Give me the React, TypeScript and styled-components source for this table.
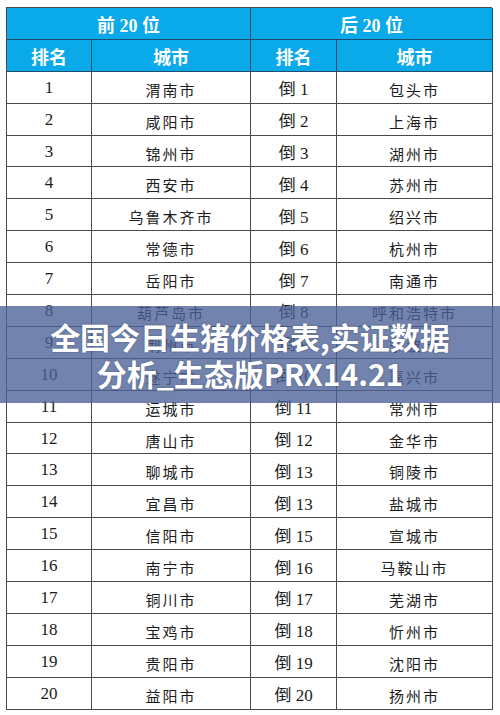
import React from 'react';
import styled, { createGlobalStyle } from 'styled-components';

const GlobalStyle = createGlobalStyle`
  html, body {
    margin: 0;
    padding: 0;
    background: #ffffff;
  }
`;

const Page = styled.div`
  position: relative;
  width: 500px;
  height: 715px;
  overflow: hidden;
  background: #fdfdfd;
  padding: 7px 8px 0 6px;
  box-sizing: border-box;
`;

const Grid = styled.div`
  display: grid;
  grid-template-columns: 85px 159px 86px 156px;
  grid-auto-rows: 31.9px;
  border-top: 1px solid #4a4a4a;
  border-left: 1px solid #4a4a4a;
  font-family: 'Liberation Serif', 'Noto Sans CJK SC', serif;
`;

const Cell = styled.div<{ $head?: boolean; $span?: number; $city?: boolean }>`
  grid-column: span ${(p) => p.$span ?? 1};
  display: flex;
  align-items: center;
  justify-content: center;
  box-sizing: border-box;
  border-right: 1px solid ${(p) => (p.$head ? '#1f4d70' : '#4a4a4a')};
  border-bottom: 1px solid ${(p) => (p.$head ? '#1f4d70' : '#4a4a4a')};
  background: ${(p) => (p.$head ? '#0aa9ea' : '#ffffff')};
  color: ${(p) => (p.$head ? '#ffffff' : '#1c1c1c')};
  font-size: ${(p) => (p.$head ? '18px' : p.$city ? '15px' : '17px')};
  font-weight: ${(p) => (p.$head ? 700 : 400)};
  letter-spacing: ${(p) => (p.$city ? '2px' : '0')};
  padding-top: ${(p) => (p.$city ? '4px' : '1px')};
`;

const Banner = styled.div`
  position: absolute;
  left: 0;
  right: 0;
  top: 306px;
  height: 97px;
  background: rgba(74, 96, 150, 0.78);
  display: flex;
  flex-direction: column;
  align-items: center;
  justify-content: center;
`;

const BannerLine = styled.div`
  font-family: 'Noto Sans CJK SC', 'Noto Sans', sans-serif;
  font-weight: 700;
  font-size: 30px;
  line-height: 37px;
  color: #ffffff;
  text-shadow: 0 0 2px rgba(40, 50, 80, 0.5);
`;

const top = ['渭南市', '咸阳市', '锦州市', '西安市', '乌鲁木齐市', '常德市', '岳阳市', '葫芦岛市', '荆州市', '遂宁市', '运城市', '唐山市', '聊城市', '宜昌市', '信阳市', '南宁市', '铜川市', '宝鸡市', '贵阳市', '益阳市'];
const bottom = ['包头市', '上海市', '湖州市', '苏州市', '绍兴市', '杭州市', '南通市', '呼和浩特市', '宁波市', '嘉兴市', '常州市', '金华市', '铜陵市', '盐城市', '宣城市', '马鞍山市', '芜湖市', '忻州市', '沈阳市', '扬州市'];
const bottomRank = ['1', '2', '3', '4', '5', '6', '7', '8', '9', '10', '11', '12', '13', '13', '15', '16', '17', '18', '19', '20'];

export default function App() {
  return (
    <Page>
      <GlobalStyle />
      <Grid>
        <Cell $head $span={2}>前 20 位</Cell>
        <Cell $head $span={2}>后 20 位</Cell>
        <Cell $head>排名</Cell>
        <Cell $head>城市</Cell>
        <Cell $head>排名</Cell>
        <Cell $head>城市</Cell>
        {top.map((city, i) => (
          <React.Fragment key={i}>
            <Cell>{i + 1}</Cell>
            <Cell $city>{city}</Cell>
            <Cell>倒 {bottomRank[i]}</Cell>
            <Cell $city>{bottom[i]}</Cell>
          </React.Fragment>
        ))}
      </Grid>
      <Banner>
        <BannerLine>全国今日生猪价格表,实证数据</BannerLine>
        <BannerLine>分析_生态版PRX14.21</BannerLine>
      </Banner>
    </Page>
  );
}
